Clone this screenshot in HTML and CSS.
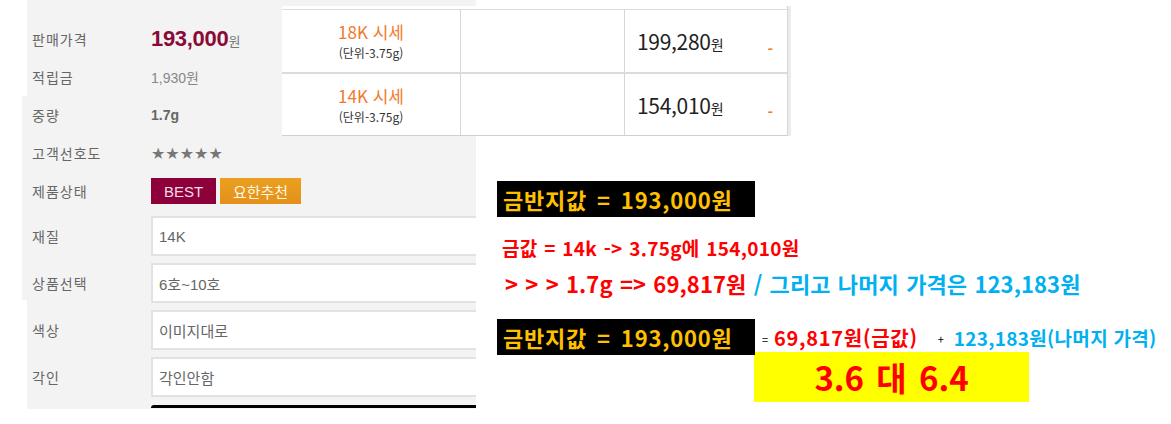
FILE: index.html
```html
<!DOCTYPE html>
<html lang="ko">
<head>
<meta charset="utf-8">
<title>금반지 가격</title>
<link rel="stylesheet" href="styles.css">
</head>
<body>
<div class="page">
  <section class="panel">
    <div class="row r-price"><span class="lbl">판매가격</span><span class="val price"><b>193,000</b><small>원</small></span></div>
    <div class="row r-point"><span class="lbl">적립금</span><span class="val point">1,930원</span></div>
    <div class="row r-weight"><span class="lbl">중량</span><span class="val weight">1.7g</span></div>
    <div class="row r-pref"><span class="lbl">고객선호도</span><span class="val stars">★★★★★</span></div>
    <div class="row r-status"><span class="lbl">제품상태</span><span class="val badges"><span class="badge best">BEST</span><span class="badge pick">요한추천</span></span></div>
    <div class="row r-box"><span class="lbl">재질</span><span class="val field">14K</span></div>
    <div class="row r-box"><span class="lbl">상품선택</span><span class="val field">6호~10호</span></div>
    <div class="row r-box"><span class="lbl">색상</span><span class="val field">이미지대로</span></div>
    <div class="row r-box"><span class="lbl">각인</span><span class="val field">각인안함</span></div>
    <div class="row r-bar"><span></span><span class="bar"></span></div>
  </section>

  <div class="rate">
    <div class="rate-row">
      <div class="cell c-name"><span class="kname">18K 시세</span><span class="unit">(단위-3.75g)</span></div>
      <div class="cell c-empty"></div>
      <div class="cell c-price"><span class="amt">199,280<small>원</small></span><span class="dash">-</span></div>
    </div>
    <div class="rate-row">
      <div class="cell c-name"><span class="kname">14K 시세</span><span class="unit">(단위-3.75g)</span></div>
      <div class="cell c-empty"></div>
      <div class="cell c-price"><span class="amt">154,010<small>원</small></span><span class="dash">-</span></div>
    </div>
  </div>

  <section class="notes">
    <div class="blackbox">금반지값 = 193,000원</div>
    <p class="line1">금값 = 14k -&gt; 3.75g에 154,010원</p>
    <p class="line2"><span class="red">&gt; &gt; &gt; 1.7g =&gt; 69,817원</span><span class="blue"> / 그리고 나머지 가격은 123,183원</span></p>
    <div class="sum-row">
      <div class="blackbox">금반지값 = 193,000원</div>
      <span class="op">=</span><span class="red part">69,817원(금값)</span><span class="op plus">+</span><span class="blue part">123,183원(나머지 가격)</span>
    </div>
    <div class="ratio">3.6 대 6.4</div>
  </section>
</div>
</body>
</html>
```

FILE: styles.css
```css
* { box-sizing: border-box; }
html, body { margin: 0; padding: 0; background: #fff; }
body {
  width: 1171px;
  height: 424px;
  overflow: hidden;
  font-family: "Liberation Sans", "Noto Sans CJK KR", sans-serif;
}
.page {
  position: relative;
  display: flex;
  align-items: flex-start;
  width: 1171px;
  height: 424px;
}

/* ---------- left product panel ---------- */
.panel {
  margin-left: 22px;
  width: 454px;
  height: 409px;
  padding: 20px 0 0 10px;
  overflow: hidden;
  background:
    linear-gradient(to right, #fff 5px, transparent 5px) no-repeat 0 0 / 100% 96px,
    linear-gradient(to right, #fff 5px, transparent 5px) no-repeat 0 300px / 100% 109px,
    #f3f3f3;
}
.row {
  display: grid;
  grid-template-columns: 119px 420px;
  align-items: center;
}
.lbl {
  font-family: "Noto Sans CJK KR", sans-serif;
  font-size: 14px;
  letter-spacing: 1px;
  color: #666;
}
.r-price { height: 37px; }
.r-point { height: 39px; }
.r-weight, .r-pref, .r-status { height: 38px; }
.price b { font-size: 22px; color: #8a0a36; font-weight: bold; letter-spacing: -0.3px; }
.price small { font-size: 13px; color: #777; font-family: "Noto Sans CJK KR", sans-serif; }
.point { font-size: 14px; color: #888; }
.weight { font-size: 14px; font-weight: bold; color: #666; }
.stars {
  font-family: "DejaVu Sans", sans-serif;
  font-size: 16px;
  letter-spacing: 0;
  color: #777;
}
.badges { display: flex; gap: 4px; }
.badge {
  display: inline-flex;
  align-items: center;
  justify-content: center;
  height: 26px;
  font-size: 15px;
}
.best { width: 65px; background: #8e0039; color: #f4dde6; }
.pick {
  width: 81px;
  background: linear-gradient(#eaa021, #e4901a);
  color: #fff6e4;
  font-family: "Noto Sans CJK KR", sans-serif;
  font-size: 15px;
}
.r-box { height: 40px; margin-top: 7px; }
.r-status + .r-box { margin-top: 6px; }
.field {
  height: 40px;
  display: flex;
  align-items: center;
  padding-left: 6px;
  background: #fff;
  border: 2px solid #e2e2e2;
  font-size: 15px;
  color: #666;
}
.r-bar { margin-top: 8px; }
.bar {
  display: block;
  height: 3px;
  background: #000;
  border-radius: 3px 0 0 0;
}

/* ---------- rate table overlay ---------- */
.rate {
  position: absolute;
  left: 282px;
  top: 6px;
  width: 506px;
  padding-top: 3px;
  background: #fff;
  border-right: 1px solid #d6d6d6;
  border-bottom: 1px solid #cfcfcf;
  box-shadow: 3px 0 0 #ececec;
  font-family: "Noto Sans CJK KR", sans-serif;
}
.rate-row {
  display: grid;
  grid-template-columns: 178px 164px 163px;
  height: 63px;
  border-top: 1px solid #dcdcdc;
}
.rate-row + .rate-row { border-top: 2px solid #dcdcdc; }
.cell { height: 100%; }
.c-empty, .c-price { border-left: 1px solid #d6d6d6; }
.c-name {
  display: flex;
  flex-direction: column;
  align-items: center;
  justify-content: center;
  gap: 2px;
}
.kname { font-size: 17px; color: #f07b2e; line-height: 22px; }
.unit { font-size: 12px; color: #333; line-height: 16px; }
.c-price {
  display: flex;
  align-items: center;
  justify-content: space-between;
  padding: 0 14px 0 12px;
}
.amt { font-size: 21px; color: #222; letter-spacing: -0.3px; }
.amt small { font-size: 14px; letter-spacing: 0; }
.dash { color: #f07b2e; font-size: 15px; font-weight: bold; margin-top: 14px; }

/* ---------- annotations ---------- */
.notes {
  flex: 1;
  padding-top: 181px;
  font-family: "Noto Sans CJK KR", sans-serif;
  font-weight: bold;
}
.notes p { margin: 0; }
.blackbox {
  width: 258px;
  height: 36px;
  margin-left: 21px;
  padding-left: 6px;
  background: #000;
  color: #ffc000;
  font-size: 22px;
  letter-spacing: 0.8px;
  word-spacing: 3px;
  line-height: 36px;
  white-space: nowrap;
}
.red { color: #ff0000; }
.blue { color: #00b0f0; }
.line1 {
  margin-top: 17px !important;
  margin-left: 26px !important;
  font-size: 19px;
  letter-spacing: 0.3px;
  word-spacing: 1px;
  line-height: 28px;
  color: #ff0000;
  white-space: nowrap;
}
.line2 {
  margin-top: 6px !important;
  margin-left: 29px !important;
  font-size: 22px;
  letter-spacing: 0.1px;
  word-spacing: 1px;
  line-height: 30px;
  white-space: nowrap;
}
.sum-row {
  display: flex;
  align-items: center;
  margin-top: 21px;
  white-space: nowrap;
}
.sum-row .blackbox { flex: none; }
.op { font-size: 11px; color: #000; font-weight: normal; margin: 4px 6px 0 7px; }
.plus { margin: 4px 10px 0 20px; }
.part { font-size: 19px; letter-spacing: 0.3px; }
.red.part { font-size: 20px; letter-spacing: 0.7px; }
.ratio {
  width: 275px;
  height: 50px;
  margin: -3px 0 0 278px;
  background: #ffff00;
  color: #ff0000;
  font-size: 33px;
  word-spacing: 3px;
  line-height: 50px;
  text-align: center;
  white-space: nowrap;
}
```
